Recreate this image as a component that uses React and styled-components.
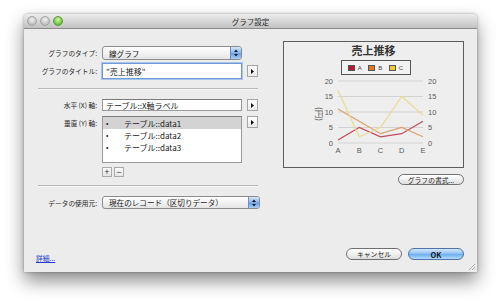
import React from 'react';
import styled, { createGlobalStyle } from 'styled-components';

const GlobalStyle = createGlobalStyle`
  html, body { margin: 0; padding: 0; background: #fff; }
  body { font-family: "Noto Sans CJK JP", "Liberation Sans", sans-serif; color: #1a1a1a; }
`;

const Page = styled.div`
  width: 500px;
  height: 305px;
  padding: 14px 0 0 24px;
  box-sizing: border-box;
  overflow: hidden;
`;

const Window = styled.div`
  position: relative;
  width: 453px;
  height: 258px;
  background: #ececec;
  display: flex;
  flex-direction: column;
  border-radius: 4px 4px 0 0;
  box-shadow: 0 9px 18px rgba(0, 0, 0, 0.45), 0 0 3px rgba(0, 0, 0, 0.35);
`;

const TitleBar = styled.div`
  flex: none;
  height: 14px;
  display: flex;
  align-items: center;
  background: linear-gradient(#ececec, #c2c2c2);
  border-bottom: 1px solid #8c8c8c;
  border-radius: 4px 4px 0 0;
`;

const Lights = styled.div`
  width: 39px;
  display: flex;
  gap: 3px;
  padding-left: 3px;
  box-sizing: border-box;
`;

const Light = styled.span`
  width: 10px;
  height: 10px;
  border-radius: 50%;
  box-sizing: border-box;
  border: 1px solid ${p => (p.green ? '#5a9a3a' : '#a4a4a4')};
  background: ${p =>
    p.green
      ? 'radial-gradient(circle at 50% 35%, #d6f7a8, #78c84a 60%, #4f9a2c)'
      : 'radial-gradient(circle at 50% 35%, #f2f2f2, #c6c6c6 60%, #adadad)'};
`;

const Title = styled.div`
  flex: 1;
  text-align: center;
  font-size: 7.5px;
  color: #2a2a2a;
`;

const Spacer = styled.div`
  width: 39px;
`;

const Body = styled.div`
  flex: 1;
  display: flex;
  flex-direction: column;
  padding: 12px 13px 12px 14px;
`;

const Main = styled.div`
  display: flex;
  gap: 23px;
`;

const LeftCol = styled.div`
  width: 222px;
  padding-top: 5px;
  display: flex;
  flex-direction: column;
`;

const Row = styled.div`
  display: grid;
  grid-template-columns: 59px 140px 11px;
  column-gap: 5px;
  align-items: ${p => p.align || 'center'};
  margin-top: ${p => p.mt || 0}px;
`;

const Label = styled.div`
  font-size: 6.7px;
  text-align: right;
  white-space: nowrap;
  color: #262626;
  padding-top: ${p => p.pt || 0}px;
`;

const Popup = styled.div`
  grid-column: ${p => (p.wide ? '2 / 4' : 'auto')};
  width: ${p => (p.wide ? '158px' : 'auto')};
  height: ${p => p.h || 13}px;
  box-sizing: border-box;
  border: 1px solid #8c8c8c;
  border-radius: 3px;
  background: linear-gradient(#ffffff, #f2f2f2 50%, #e4e4e4);
  display: flex;
  align-items: center;
  font-size: 7.6px;
  padding-left: 6px;
  overflow: hidden;
  white-space: nowrap;
`;

const Stepper = styled.span`
  margin-left: auto;
  width: 10px;
  height: 100%;
  flex: none;
  display: flex;
  align-items: center;
  justify-content: center;
  border-left: 1px solid #6d8fbd;
  background: linear-gradient(#d5e6fa, #8fb8ea 45%, #6c9ee0 55%, #a9d0f8);
`;

const Field = styled.div`
  height: ${p => p.h || 12}px;
  box-sizing: border-box;
  background: #fff;
  border: 1px solid ${p => (p.focus ? '#6f9ad6' : '#9a9a9a')};
  border-top-color: ${p => (p.focus ? '#6f9ad6' : '#7a7a7a')};
  box-shadow: ${p => (p.focus ? '0 0 0 1px #a7c5ec' : 'none')};
  display: flex;
  align-items: center;
  padding-left: 3px;
  font-size: 8px;
  white-space: nowrap;
`;

const MiniButton = styled.div`
  width: 11px;
  height: 12px;
  box-sizing: border-box;
  border: 1px solid #a6a6a6;
  background: linear-gradient(#ffffff, #e9e9e9);
  display: flex;
  align-items: center;
  justify-content: center;
`;

const Separator = styled.div`
  height: 1px;
  width: 220px;
  background: #b9b9b9;
  border-bottom: 1px solid #f8f8f8;
  margin-top: ${p => p.mt}px;
`;

const List = styled.div`
  height: 47px;
  box-sizing: border-box;
  background: #fff;
  border: 1px solid #9a9a9a;
  border-top-color: #7c7c7c;
`;

const ListRow = styled.div`
  height: 12px;
  display: flex;
  align-items: center;
  font-size: 8px;
  background: ${p => (p.selected ? '#d3d3d3' : 'transparent')};
  white-space: nowrap;
`;

const Bullet = styled.span`
  width: 18px;
  padding-left: 3px;
  font-size: 7px;
`;

const PlusMinus = styled.div`
  grid-column: 2;
  display: flex;
  gap: 2px;
`;

const SquareButton = styled.div`
  width: 10px;
  height: 10px;
  box-sizing: border-box;
  border: 1px solid #a9a9a9;
  background: linear-gradient(#fbfbfb, #e6e6e6);
  display: flex;
  align-items: center;
  justify-content: center;
  font-family: "Liberation Sans", sans-serif;
  font-size: 9px;
  line-height: 1;
  color: #333;
`;

const RightCol = styled.div`
  width: 181px;
  display: flex;
  flex-direction: column;
  align-items: flex-end;
`;

const ChartBox = styled.div`
  width: 181px;
  height: 127px;
  box-sizing: border-box;
  border: 1px solid #5c5c5c;
  background: #eeeeee;
  display: flex;
  flex-direction: column;
  align-items: center;
`;

const ChartTitle = styled.div`
  font-size: 11px;
  font-weight: bold;
  line-height: 15px;
  margin-top: 1px;
  color: #333;
`;

const Legend = styled.div`
  width: 70px;
  height: 15px;
  box-sizing: border-box;
  border: 1px solid #555;
  background: #f2f2f2;
  display: flex;
  align-items: center;
  justify-content: space-around;
  padding: 0 3px;
  margin-top: 2px;
  margin-left: 4px;
`;

const LegendItem = styled.span`
  display: flex;
  align-items: center;
  gap: 3px;
  font-family: "Liberation Sans Narrow", "Liberation Sans", sans-serif;
  font-size: 6px;
  color: #444;
`;

const Swatch = styled.span`
  width: 5px;
  height: 4px;
  border: 1px solid #555;
  background: ${p => p.color};
`;

const PillButton = styled.div`
  height: 11px;
  width: ${p => p.w}px;
  box-sizing: border-box;
  border: 1px solid ${p => (p.primary ? '#4d73a8' : '#707070')};
  border-radius: 7px;
  background: ${p =>
    p.primary
      ? 'linear-gradient(#d2e8fc, #93c3f2 45%, #6fb0ef 55%, #b4dcfd)'
      : 'linear-gradient(#ffffff, #f0f0f0 50%, #dedede)'};
  display: flex;
  align-items: center;
  justify-content: center;
  font-size: ${p => (p.primary ? 7.5 : 6.8)}px;
  font-weight: ${p => (p.primary ? 'bold' : 'normal')};
  color: #1c1c1c;
  margin-top: ${p => p.mt || 0}px;
`;

const Footer = styled.div`
  margin-top: auto;
  display: flex;
  align-items: flex-end;
  justify-content: space-between;
  margin-left: -2px;
`;

const Link = styled.a`
  font-size: 6.8px;
  color: #1f3ccf;
  text-decoration: underline;
  margin-bottom: -3px;
`;

const ButtonGroup = styled.div`
  display: flex;
  gap: 6px;
  height: 12px;
  & > div { height: 12px; }
`;

const Grip = styled.svg`
  position: absolute;
  right: 1px;
  bottom: 1px;
`;

const Tri = () => (
  <svg width="3" height="5" viewBox="0 0 3 5">
    <path d="M0 0 L3 2.5 L0 5 Z" fill="#111" />
  </svg>
);

const Arrows = () => (
  <svg width="4" height="8" viewBox="0 0 4 8">
    <path d="M0 3 L2 0.5 L4 3 Z M0 5 L2 7.5 L4 5 Z" fill="#0d1c33" />
  </svg>
);

const series = [
  { color: '#c8485a', data: [1, 5, 2, 3, 7] },
  { color: '#d9a070', data: [11, 7, 3, 5, 2] },
  { color: '#eadb8e', data: [17, 2, 5, 15, 9] },
];

const px = i => 54 + i * 21.25;
const py = v => 68 - v * 3.1;

function Chart() {
  const ticks = [0, 5, 10, 15, 20];
  const labelFont = { fontFamily: '"Liberation Sans Narrow", "Liberation Sans", sans-serif', fontSize: 7.5, fill: '#5a5a5a' };
  return (
    <svg width="179" height="91" viewBox="0 0 179 91">
      {ticks.map(t => (
        <g key={t}>
          <line x1={px(0)} x2={px(4)} y1={py(t)} y2={py(t)} stroke="#d2d2d2" strokeWidth="1" />
          <text x="49" y={py(t) + 2.7} textAnchor="end" style={labelFont}>{t}</text>
          <text x="144" y={py(t) + 2.7} style={labelFont}>{t}</text>
        </g>
      ))}
      {['A', 'B', 'C', 'D', 'E'].map((l, i) => (
        <text key={l} x={px(i)} y="77.5" textAnchor="middle" style={labelFont}>{l}</text>
      ))}
      <text
        x="0"
        y="0"
        transform="translate(32 39) rotate(90)"
        textAnchor="middle"
        style={{ fontFamily: '"Noto Sans CJK JP", sans-serif', fontSize: 8.5, fill: '#5a5a5a' }}
      >
        (円)
      </text>
      {series.map(s => (
        <polyline
          key={s.color}
          points={s.data.map((v, i) => `${px(i)},${py(v)}`).join(' ')}
          fill="none"
          stroke={s.color}
          strokeWidth="1.2"
        />
      ))}
    </svg>
  );
}

export default function App() {
  return (
    <Page>
      <GlobalStyle />
      <Window>
        <TitleBar>
          <Lights>
            <Light />
            <Light />
            <Light green />
          </Lights>
          <Title>グラフ設定</Title>
          <Spacer />
        </TitleBar>
        <Body>
          <Main>
            <LeftCol>
              <Row>
                <Label>グラフのタイプ:</Label>
                <Popup h={14}>
                  線グラフ
                  <Stepper><Arrows /></Stepper>
                </Popup>
              </Row>
              <Row mt={3}>
                <Label>グラフのタイトル:</Label>
                <Field focus h={16}>"売上推移"</Field>
                <MiniButton><Tri /></MiniButton>
              </Row>
              <Separator mt={9} />
              <Row mt={9}>
                <Label>水平 (X) 軸:</Label>
                <Field>テーブル::X軸ラベル</Field>
                <MiniButton><Tri /></MiniButton>
              </Row>
              <Row mt={5} align="start">
                <Label pt={2}>垂直 (Y) 軸:</Label>
                <List>
                  <ListRow selected><Bullet>•</Bullet>テーブル::data1</ListRow>
                  <ListRow><Bullet>•</Bullet>テーブル::data2</ListRow>
                  <ListRow><Bullet>•</Bullet>テーブル::data3</ListRow>
                </List>
                <MiniButton><Tri /></MiniButton>
              </Row>
              <Row mt={4}>
                <PlusMinus>
                  <SquareButton>+</SquareButton>
                  <SquareButton>−</SquareButton>
                </PlusMinus>
              </Row>
              <Separator mt={8} />
              <Row mt={9}>
                <Label>データの使用元:</Label>
                <Popup wide>
                  現在のレコード（区切りデータ）
                  <Stepper><Arrows /></Stepper>
                </Popup>
              </Row>
            </LeftCol>
            <RightCol>
              <ChartBox>
                <ChartTitle>売上推移</ChartTitle>
                <Legend>
                  <LegendItem><Swatch color="#b8192e" />A</LegendItem>
                  <LegendItem><Swatch color="#e0781e" />B</LegendItem>
                  <LegendItem><Swatch color="#f0cc2a" />C</LegendItem>
                </Legend>
                <Chart />
              </ChartBox>
              <PillButton w={66} mt={6}>グラフの書式...</PillButton>
            </RightCol>
          </Main>
          <Footer>
            <Link>詳細...</Link>
            <ButtonGroup>
              <PillButton w={56}>キャンセル</PillButton>
              <PillButton w={56} primary>OK</PillButton>
            </ButtonGroup>
          </Footer>
        </Body>
        <Grip width="8" height="8" viewBox="0 0 8 8">
          <path d="M7 1 L1 7 M7 4 L4 7 M7 6.5 L6.5 7" stroke="#9a9a9a" strokeWidth="0.8" />
        </Grip>
      </Window>
    </Page>
  );
}
